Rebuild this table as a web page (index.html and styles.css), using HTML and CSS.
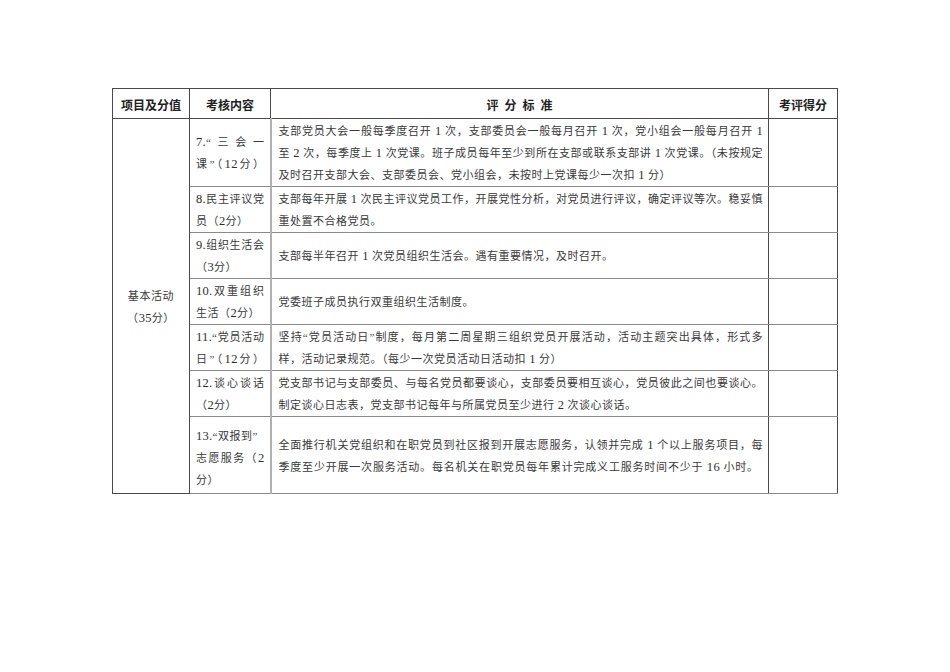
FILE: index.html
```html
<!DOCTYPE html>
<html lang="zh-Hans">
<head>
<meta charset="utf-8">
<title>考核表</title>
<link rel="stylesheet" href="styles.css">
</head>
<body>
<div class="page">
  <table class="sheet">
    <colgroup>
      <col class="c1"><col class="c2"><col class="c3"><col class="c4">
    </colgroup>
    <thead>
      <tr class="hd">
        <th>项目及分值</th>
        <th>考核内容</th>
        <th class="spaced">评分标准</th>
        <th>考评得分</th>
      </tr>
    </thead>
    <tbody>
      <tr class="r7">
        <td class="grp" rowspan="7"><span class="ln">基本活动</span><span class="ln">（<span class="n">35</span>分）</span></td>
        <td class="item"><span class="ln j"><span class="n">7.</span>“三会一</span><span class="ln j">课”（<span class="n">12</span>分）</span></td>
        <td class="std"><span class="ln j">支部党员大会一般每季度召开 <span class="n">1</span> 次，支部委员会一般每月召开 <span class="n">1</span> 次，党小组会一般每月召开 <span class="n">1</span></span><span class="ln j">至 <span class="n">2</span> 次，每季度上 <span class="n">1</span> 次党课。班子成员每年至少到所在支部或联系支部讲 <span class="n">1</span> 次党课。（未按规定</span><span class="ln">及时召开支部大会、支部委员会、党小组会，未按时上党课每少一次扣 <span class="n">1</span> 分）</span></td>
        <td class="score"></td>
      </tr>
      <tr class="r8">
        <td class="item"><span class="ln j"><span class="n">8.</span>民主评议党</span><span class="ln">员（<span class="n">2</span>分）</span></td>
        <td class="std"><span class="ln j">支部每年开展 <span class="n">1</span> 次民主评议党员工作，开展党性分析，对党员进行评议，确定评议等次。稳妥慎</span><span class="ln">重处置不合格党员。</span></td>
        <td class="score"></td>
      </tr>
      <tr class="r9">
        <td class="item"><span class="ln j"><span class="n">9.</span>组织生活会</span><span class="ln">（<span class="n">3</span>分）</span></td>
        <td class="std"><span class="ln">支部每半年召开 <span class="n">1</span> 次党员组织生活会。遇有重要情况，及时召开。</span></td>
        <td class="score"></td>
      </tr>
      <tr class="r10">
        <td class="item"><span class="ln j"><span class="n">10.</span>双重组织</span><span class="ln">生活（<span class="n">2</span>分）</span></td>
        <td class="std"><span class="ln">党委班子成员执行双重组织生活制度。</span></td>
        <td class="score"></td>
      </tr>
      <tr class="r11">
        <td class="item"><span class="ln j"><span class="n">11.</span>“党员活动</span><span class="ln j">日”（<span class="n">12</span>分）</span></td>
        <td class="std"><span class="ln j">坚持“党员活动日”制度，每月第二周星期三组织党员开展活动，活动主题突出具体，形式多</span><span class="ln">样，活动记录规范。（每少一次党员活动日活动扣 <span class="n">1</span> 分）</span></td>
        <td class="score"></td>
      </tr>
      <tr class="r12">
        <td class="item"><span class="ln j"><span class="n">12.</span>谈心谈话</span><span class="ln">（<span class="n">2</span>分）</span></td>
        <td class="std"><span class="ln j">党支部书记与支部委员、与每名党员都要谈心，支部委员要相互谈心，党员彼此之间也要谈心。</span><span class="ln">制定谈心日志表，党支部书记每年与所属党员至少进行 <span class="n">2</span> 次谈心谈话。</span></td>
        <td class="score"></td>
      </tr>
      <tr class="r13">
        <td class="item low"><span class="ln"><span class="n">13.</span>“双报到”</span><span class="ln j">志愿服务（<span class="n">2</span></span><span class="ln">分）</span></td>
        <td class="std"><span class="ln j">全面推行机关党组织和在职党员到社区报到开展志愿服务，认领并完成 <span class="n">1</span> 个以上服务项目，每</span><span class="ln wide">季度至少开展一次服务活动。每名机关在职党员每年累计完成义工服务时间不少于 <span class="n">16</span> 小时。</span></td>
        <td class="score"></td>
      </tr>
    </tbody>
  </table>
</div>
</body>
</html>
```

FILE: styles.css
```css
html, body {
  margin: 0;
  padding: 0;
  background: #ffffff;
}

.page {
  padding: 88px 0 0 112px;
}

.sheet {
  border-collapse: collapse;
  table-layout: fixed;
  width: 726px;
  border: 1px solid #4a4a4a;
  font-family: "Liberation Serif", "Noto Sans CJK SC", serif;
  font-size: 11px;
  letter-spacing: 0.5px;
  color: #3a3a3a;
}

.n {
  font-family: "Liberation Serif", serif;
  font-size: 12.5px;
  letter-spacing: 0.3px;
  color: #2e2e2e;
}

.c1 { width: 77px; }
.c2 { width: 81px; }
.c3 { width: 498px; }
.c4 { width: 69px; }

.sheet th {
  height: 28px;
  padding: 1px 0 0 0;
  font-family: "Noto Sans CJK SC", sans-serif;
  font-weight: 700;
  font-size: 12px;
  letter-spacing: 0;
  color: #222222;
  text-align: center;
  vertical-align: middle;
  border: 1px solid #4a4a4a;
}

.sheet th.spaced {
  letter-spacing: 6px;
  padding-left: 6px;
}

.sheet td {
  padding: 1px 0 0 0;
  vertical-align: middle;
  line-height: 22px;
  border-left: 1px solid #4a4a4a;
  border-right: 1px solid #4a4a4a;
  border-top: 1px solid #8a8a8a;
  border-bottom: 1px solid #8a8a8a;
}

.sheet td.grp {
  border-bottom: 1px solid #4a4a4a;
}

.sheet td.grp .ln {
  text-align: center;
  letter-spacing: 0.6px;
}

.sheet td.item {
  padding-left: 6px;
  padding-right: 5px;
  border-right: 2px solid #b0b0b0;
}

.sheet td.item.low {
  vertical-align: bottom;
  padding-top: 0;
  padding-bottom: 2px;
}

.sheet td.std {
  padding-left: 7px;
  padding-right: 5px;
  border-left: 2px solid #b0b0b0;
}

.ln {
  display: block;
  white-space: nowrap;
  text-align: left;
}

.ln.j {
  text-align: justify;
  text-align-last: justify;
}

.ln.wide {
  letter-spacing: 0.8px;
}

.r7 { height: 68px; }
.r8 { height: 45px; }
.r9 { height: 45px; }
.r10 { height: 45px; }
.r11 { height: 45px; }
.r12 { height: 45px; }
.r13 { height: 77px; }
```
